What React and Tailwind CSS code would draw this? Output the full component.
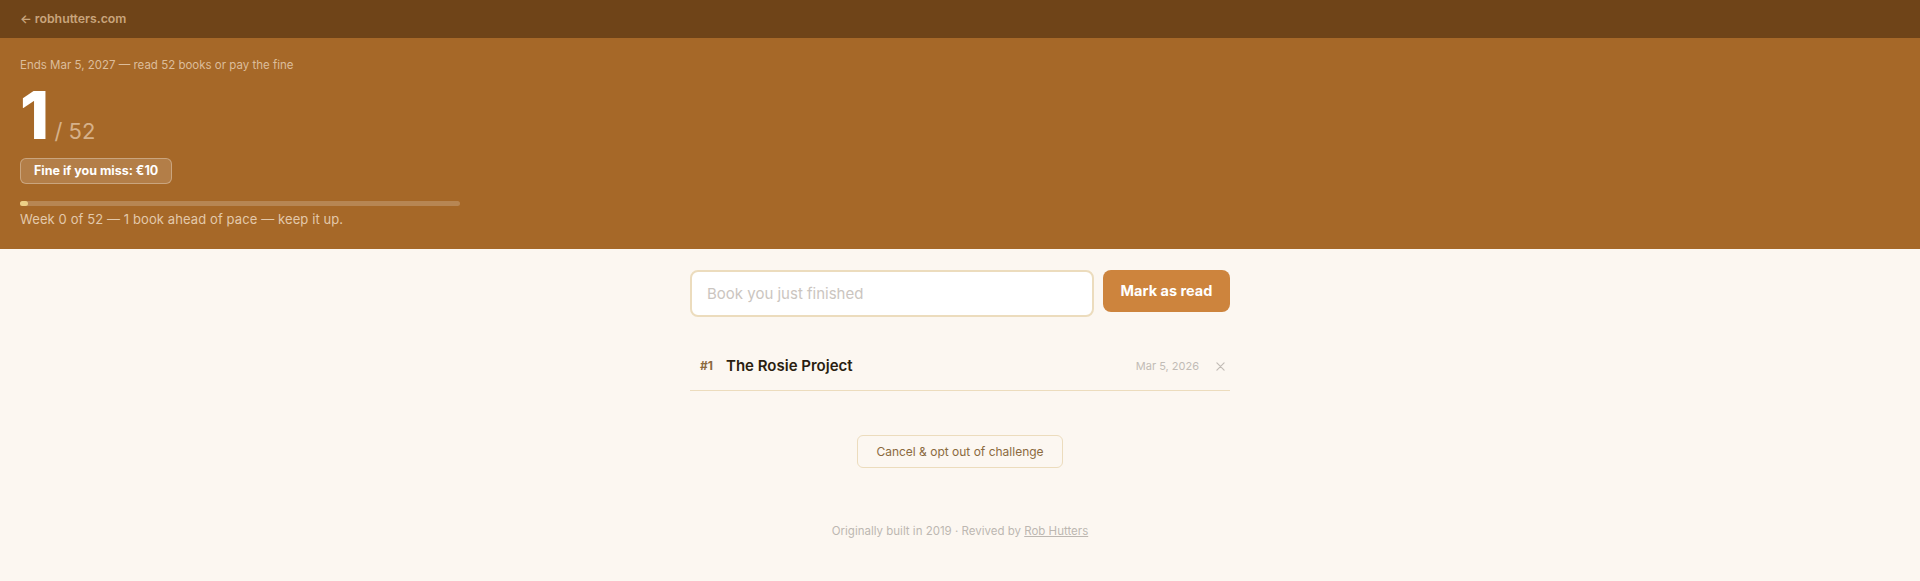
import React, { useState } from "react";

const books = [{ id: 1, title: "The Rosie Project", date: "Mar 5, 2026" }];

const App = () => {
  const [title, setTitle] = useState("");
  const read = books.length;
  const goal = 52;

  return (
    <div className="min-h-screen bg-[#fcf7f1] font-['Inter','Liberation_Sans',sans-serif]">
      <div className="h-[38px] bg-[#6f4418] px-5 flex items-center">
        <a href="#" className="text-[12.3px] font-semibold text-[#c9a47c]">
          ← robhutters.com
        </a>
      </div>

      <div className="bg-[#a66828] px-5 pt-[19px] pb-[21px]">
        <p className="text-[11.5px] leading-4 text-[#dcbd9b]">
          Ends Mar 5, 2027 — read 52 books or pay the fine
        </p>
        <div className="mt-[9px] flex items-baseline gap-[7px]">
          <span className="text-[66px] leading-none font-extrabold text-white tracking-tight">{read}</span>
          <span className="text-[22px] leading-none text-[#d6b18a]">/ {goal}</span>
        </div>
        <div className="mt-[10px] inline-flex items-center h-[26px] px-[13px] rounded-md border border-white/30 bg-white/15 text-[12.5px] font-bold text-white">
          Fine if you miss: €10
        </div>
        <div className="mt-[17px] w-[440px] h-[5px] rounded-full bg-white/20">
          <div className="h-full rounded-full bg-[#ecd087]" style={{ width: `${(read / goal) * 100}%`, minWidth: 8 }} />
        </div>
        <p className="mt-1 text-[13px] leading-[18px] tracking-[0.1px] text-[#e3c9ab]">
          Week 0 of 52 — 1 book ahead of pace — keep it up.
        </p>
      </div>

      <div className="w-[540px] mx-auto pt-[21px]">
        <div className="flex items-start gap-[9px]">
          <input
            value={title}
            onChange={(e) => setTitle(e.target.value)}
            placeholder="Book you just finished"
            className="flex-1 h-[47px] rounded-lg border-2 border-[#ecdcbd] bg-white px-[15px] text-[15px] text-[#2a1e10] placeholder:text-[#cbc5c0] outline-none"
          />
          <button className="h-[42px] w-[127px] rounded-lg bg-[#cd843d] text-[14.5px] font-bold text-white">
            Mark as read
          </button>
        </div>

        <ul className="mt-[25px]">
          {books.map((b) => (
            <li key={b.id} className="flex items-center py-[14px] pl-[10px] pr-[5px] border-b border-[#ecdcbd]">
              <span className="w-[26px] text-[12px] font-bold text-[#8b6a3e]">#{b.id}</span>
              <span className="flex-1 text-[15px] leading-5 font-semibold text-[#2a1e10]">{b.title}</span>
              <span className="text-[11px] text-[#c2bcb6]">{b.date}</span>
              <button className="ml-[17px] text-[#c2bcb6]">
                <svg width="9" height="9" viewBox="0 0 10 10" fill="none" stroke="currentColor" strokeWidth="1.3" strokeLinecap="round">
                  <path d="M1 1l8 8M9 1l-8 8" />
                </svg>
              </button>
            </li>
          ))}
        </ul>

        <div className="mt-[44px] flex justify-center">
          <button className="h-[33px] px-[18px] rounded-md border border-[#ecdcbd] text-[12px] text-[#8b6a3e]">
            Cancel &amp; opt out of challenge
          </button>
        </div>

        <p className="mt-[55px] text-center text-[11.5px] text-[#bdb7b1]">
          Originally built in 2019 · Revived by{" "}
          <a href="#" className="underline">Rob Hutters</a>
        </p>
      </div>
    </div>
  );
};

export default App;
